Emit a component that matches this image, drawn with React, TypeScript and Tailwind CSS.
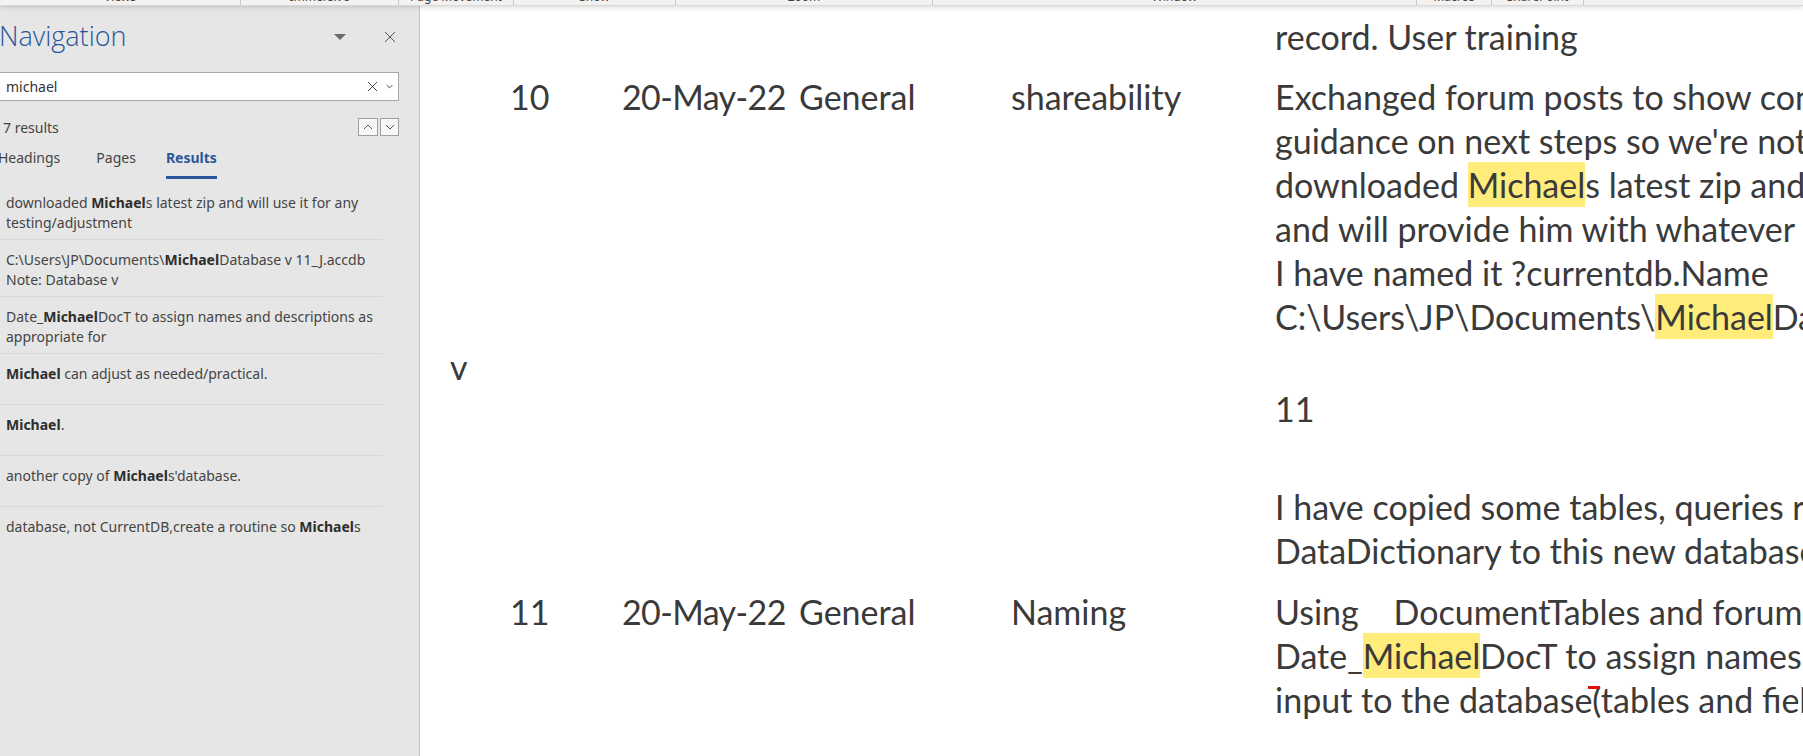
import React from "react";

const navFont = { fontFamily: '"Noto Sans", "Open Sans", sans-serif' };
const docFont = { fontFamily: 'Lato, "Noto Sans", sans-serif' };

function Hl({ children }: { children: React.ReactNode }) {
  return <span className="bg-[#ffec7a] py-[2px]">{children}</span>;
}

function B({ children }: { children: React.ReactNode }) {
  return <b className="font-bold text-[#2e2e2e]">{children}</b>;
}

const ribbonGroups: { w: string; label: string }[] = [
  { w: "w-[241px]", label: "Views" },
  { w: "w-[158px]", label: "Immersive" },
  { w: "w-[115px]", label: "Page Movement" },
  { w: "w-[162px]", label: "Show" },
  { w: "w-[257px]", label: "Zoom" },
  { w: "w-[484px]", label: "Window" },
  { w: "w-[75px]", label: "Macros" },
  { w: "w-[92px]", label: "SharePoint" },
];

function Ribbon() {
  return (
    <div
      className="relative z-10 flex h-[6px] shrink-0 bg-[#f3f2f1] border-b border-[#d8d8d8] shadow-[0_2px_4px_rgba(0,0,0,0.13)]"
      style={navFont}
    >
      {ribbonGroups.map((g) => (
        <div
          key={g.label}
          className={`${g.w} h-full overflow-hidden border-r border-[#c8c8c8] flex justify-center`}
        >
          <span className="text-[12px] leading-[14px] -mt-[10px] text-[#444] whitespace-nowrap">
            {g.label}
          </span>
        </div>
      ))}
    </div>
  );
}

function XIcon({ size, color, stroke = 1 }: { size: number; color: string; stroke?: number }) {
  return (
    <svg width={size} height={size} viewBox="0 0 12 12" fill="none">
      <path d="M1 1L11 11M11 1L1 11" stroke={color} strokeWidth={stroke} />
    </svg>
  );
}

function Chevron({ up = false, size = 8, color = "#555", stroke = 1 }: { up?: boolean; size?: number; color?: string; stroke?: number }) {
  return (
    <svg width={size} height={size} viewBox="0 0 10 10" fill="none">
      <path d={up ? "M1 7L5 3L9 7" : "M1 3L5 7L9 3"} stroke={color} strokeWidth={stroke} />
    </svg>
  );
}

const results: React.ReactNode[] = [
  <>
    downloaded <B>Michael</B>s latest zip and will use it for any testing/adjustment
  </>,
  <>
    C:\Users\JP\Documents\<B>Michael</B>Database v 11_J.accdb Note: Database v
  </>,
  <>
    Date_<B>Michael</B>DocT to assign names and descriptions as appropriate for
  </>,
  <>
    <B>Michael</B> can adjust as needed/practical.
  </>,
  <>
    <B>Michael</B>.
  </>,
  <>
    another copy of <B>Michael</B>s'database.
  </>,
  <>
    database, not CurrentDB,create a routine so <B>Michael</B>s
  </>,
];

function NavPane() {
  return (
    <aside
      className="w-[420px] shrink-0 bg-[#e6e6e6] border-r border-[#c4c4c4] flex flex-col"
      style={navFont}
    >
      {/* title */}
      <div className="h-[61px] flex items-center">
        <span
          className="text-[27px] font-light text-[#2b579a] leading-none -ml-[1px] -mt-[2px]"
          style={{ fontFamily: '"Open Sans", "Noto Sans", sans-serif' }}
        >
          Navigation
        </span>
        <div className="ml-auto flex items-center">
          <svg width="12" height="6" viewBox="0 0 12 6" className="mr-[38px]">
            <path d="M0 0H12L6 6Z" fill="#6a6a6a" />
          </svg>
          <div className="mr-[23px]">
            <XIcon size={12} color="#555" />
          </div>
        </div>
      </div>

      {/* search */}
      <div className="mt-[5px] h-[29px] w-[399px] bg-white border-y border-r border-[#a8a8a8] flex items-center">
        <span className="pl-[6px] text-[14px] text-[#333]">michael</span>
        <div className="ml-auto flex items-center">
          <XIcon size={11} color="#333" />
          <div className="ml-[8px] mr-[5px]">
            <Chevron size={7} color="#333" stroke={1.3} />
          </div>
        </div>
      </div>

      {/* results count */}
      <div className="mt-[16px] h-[20px] w-[399px] flex items-center">
        <span className="pl-[3px] text-[14px] text-[#444]">7 results</span>
        <div className="ml-auto flex gap-[2px]">
          <div className="w-[20px] h-[18px] bg-[#f7f7f7] border border-[#a0a0a0] flex items-center justify-center">
            <Chevron up size={10} />
          </div>
          <div className="w-[19px] h-[18px] bg-[#f7f7f7] border border-[#a0a0a0] flex items-center justify-center">
            <Chevron size={10} />
          </div>
        </div>
      </div>

      {/* tabs */}
      <div className="mt-[8px] flex text-[14px]">
        <div className="-ml-[2px] flex flex-col">
          <span className="leading-[26px] text-[#444]">Headings</span>
          <div className="mt-[5px] h-[3px]" />
        </div>
        <div className="ml-[36px] flex flex-col">
          <span className="leading-[26px] text-[#444]">Pages</span>
          <div className="mt-[5px] h-[3px]" />
        </div>
        <div className="ml-[30px] flex flex-col">
          <span className="leading-[26px] font-bold text-[#2b579a]">Results</span>
          <div className="mt-[5px] h-[3px] bg-[#2b579a]" />
        </div>
      </div>

      {/* results list */}
      <div className="mt-[4px] w-[383px] flex flex-col">
        {results.map((r, i) => (
          <div
            key={i}
            className={`min-h-[51px] pl-[6px] pr-[4px] pt-[10px] pb-[6px] text-[14px] leading-[20px] text-[#444] ${
              i < results.length - 1 ? "border-b border-[#d8d8d8]" : ""
            }`}
          >
            {r}
          </div>
        ))}
      </div>
    </aside>
  );
}

function Line({ children, className = "" }: { children: React.ReactNode; className?: string }) {
  return <div className={`h-[44px] leading-[44px] whitespace-nowrap ${className}`}>{children}</div>;
}

function Doc() {
  return (
    <main className="flex-1 min-w-0 overflow-hidden bg-white text-[34px] text-[#3a3a3a]" style={docFont}>
      <div className="pt-[9px]">
        {/* tail of previous row */}
        <div className="flex">
          <div className="w-[855px] shrink-0" />
          <div className="min-w-0 flex-1">
            <Line>record. User training</Line>
          </div>
        </div>

        {/* row 10 */}
        <div className="mt-[16px] flex">
          <div className="w-[30px] shrink-0" />
          <div className="w-[60px] shrink-0 pt-[270px]">
            <Line>v</Line>
          </div>
          <div className="w-[112px] shrink-0">
            <Line>10</Line>
          </div>
          <div className="w-[177px] shrink-0">
            <Line className="tracking-[-0.6px]">20-May-22</Line>
          </div>
          <div className="w-[212px] shrink-0">
            <Line>General</Line>
          </div>
          <div className="w-[264px] shrink-0">
            <Line>shareability</Line>
          </div>
          <div className="min-w-0 flex-1">
            <Line>Exchanged forum posts to show concepts and get</Line>
            <Line>guidance on next steps so we're not duplicating</Line>
            <Line>
              downloaded <Hl>Michael</Hl>s latest zip and will use it for any
            </Line>
            <Line>and will provide him with whatever he needs.</Line>
            <Line>I have named it ?currentdb.Name</Line>
            <Line>
              C:\Users\JP\Documents\<Hl>Michael</Hl>Database v 11_J.accdb
            </Line>
            <Line className="mt-[48px]">11</Line>
            <Line className="mt-[54px]">I have copied some tables, queries rather than</Line>
            <Line>DataDictionary to this new database.</Line>
          </div>
        </div>

        {/* row 11 */}
        <div className="mt-[17px] flex">
          <div className="w-[90px] shrink-0" />
          <div className="w-[112px] shrink-0">
            <Line>11</Line>
          </div>
          <div className="w-[177px] shrink-0">
            <Line className="tracking-[-0.6px]">20-May-22</Line>
          </div>
          <div className="w-[212px] shrink-0">
            <Line>General</Line>
          </div>
          <div className="w-[264px] shrink-0">
            <Line>Naming</Line>
          </div>
          <div className="min-w-0 flex-1">
            <Line>
              Using&nbsp;&nbsp;&nbsp;&nbsp;DocumentTables and forum posts
            </Line>
            <Line>
              Date_<Hl>Michael</Hl>DocT to assign names and descriptions
            </Line>
            <Line>
              input to the database
              <span className="relative">
                <span className="absolute left-[-4px] top-[7px] w-[12px] h-[3px] bg-[#e01010]" />
                (
              </span>
              tables and fields
            </Line>
          </div>
        </div>
      </div>
    </main>
  );
}

export default function App() {
  return (
    <div className="w-[1803px] h-[756px] overflow-hidden bg-white flex flex-col">
      <Ribbon />
      <div className="flex flex-1 min-h-0">
        <NavPane />
        <Doc />
      </div>
    </div>
  );
}
